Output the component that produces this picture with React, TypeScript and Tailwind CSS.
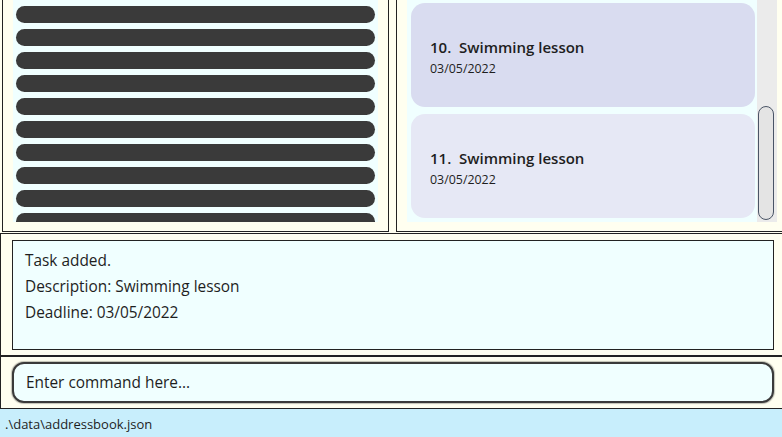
import React from 'react';

const bars = Array.from({ length: 10 }, (_, i) => i);

const tasks = [
  { id: 10, title: 'Swimming lesson', date: '03/05/2022', bg: 'bg-[#d9dcf0]' },
  { id: 11, title: 'Swimming lesson', date: '03/05/2022', bg: 'bg-[#e6e8f5]' },
];

const TaskCard = ({ id, title, date, bg }: { id: number; title: string; date: string; bg: string }) => (
  <div className={`h-[104px] shrink-0 rounded-[14px] ${bg} pl-[19px] pt-[4px] flex flex-col justify-center`}>
    <div className="text-[15px] font-semibold text-[#1e1e1e] leading-[20px]">
      {id}.&nbsp;&nbsp;{title}
    </div>
    <div className="mt-[3px] text-[12.4px] text-[#1e1e1e] leading-[18px]">{date}</div>
  </div>
);

export default function App() {
  return (
    <div
      className="w-[782px] h-[437px] bg-[#fffff0] flex flex-col overflow-hidden"
      style={{ fontFamily: '"Open Sans", "Noto Sans", sans-serif' }}
    >
      {/* top panels */}
      <div className="h-[233px] flex shrink-0">
        <div className="ml-[2px] w-[387px] h-[232px] border-x border-b border-[#222] px-[10px] pb-[9px]">
          <div className="h-full bg-[#f0ffff] px-[3px] pt-[6px] flex flex-col gap-[6px] overflow-hidden">
            {bars.map((b) => (
              <div key={b} className="h-[17px] shrink-0 rounded-full bg-[#3a3a3a]" />
            ))}
          </div>
        </div>
        <div className="ml-[7px] flex-1 h-[232px] border-l border-b border-[#222] pl-[10px] pr-[5px] pb-[9px]">
          <div className="h-full bg-[#f0ffff] flex">
            <div className="flex-1 pl-[4px] pr-[2px] pt-[3px] flex flex-col gap-[7px] overflow-hidden">
              {tasks.map((t) => (
                <TaskCard key={t.id} {...t} />
              ))}
            </div>
            <div className="w-[20px] bg-[#ebebeb] pt-[106px] pb-[2px] pl-[1px] pr-[3px]">
              <div className="h-full rounded-full border border-[#4a5566] bg-[#e4e4e4]" />
            </div>
          </div>
        </div>
      </div>

      {/* result display */}
      <div className="h-[124px] shrink-0 border-t border-l border-b-2 border-[#222] pl-[11px] pr-[8px] pt-[6px] pb-[5px]">
        <div className="h-[110px] border border-[#222] bg-[#f0ffff] pl-[12px] pt-[7px] text-[15.4px] leading-[26px] text-[#1e1e1e]">
          <div>Task added.</div>
          <div>Description: Swimming lesson</div>
          <div>Deadline: 03/05/2022</div>
        </div>
      </div>

      {/* command box */}
      <div className="h-[52px] shrink-0 border-l border-b border-[#222] pl-[11px] pr-[8px] pt-[5px]">
        <div className="h-[41px] rounded-[12px] border-2 border-[#3a3a3a] bg-[#f0ffff] shadow-[0_0_1px_1px_rgba(0,0,0,0.25)] flex items-center pl-[12px] text-[15.4px] text-[#1e1e1e]">
          Enter command here...
        </div>
      </div>

      {/* status bar */}
      <div className="flex-1 bg-[#c8eefc] flex items-center pl-[5px] pt-[4px] text-[13px] text-[#1e1e1e]">
        .\data\addressbook.json
      </div>
    </div>
  );
}
